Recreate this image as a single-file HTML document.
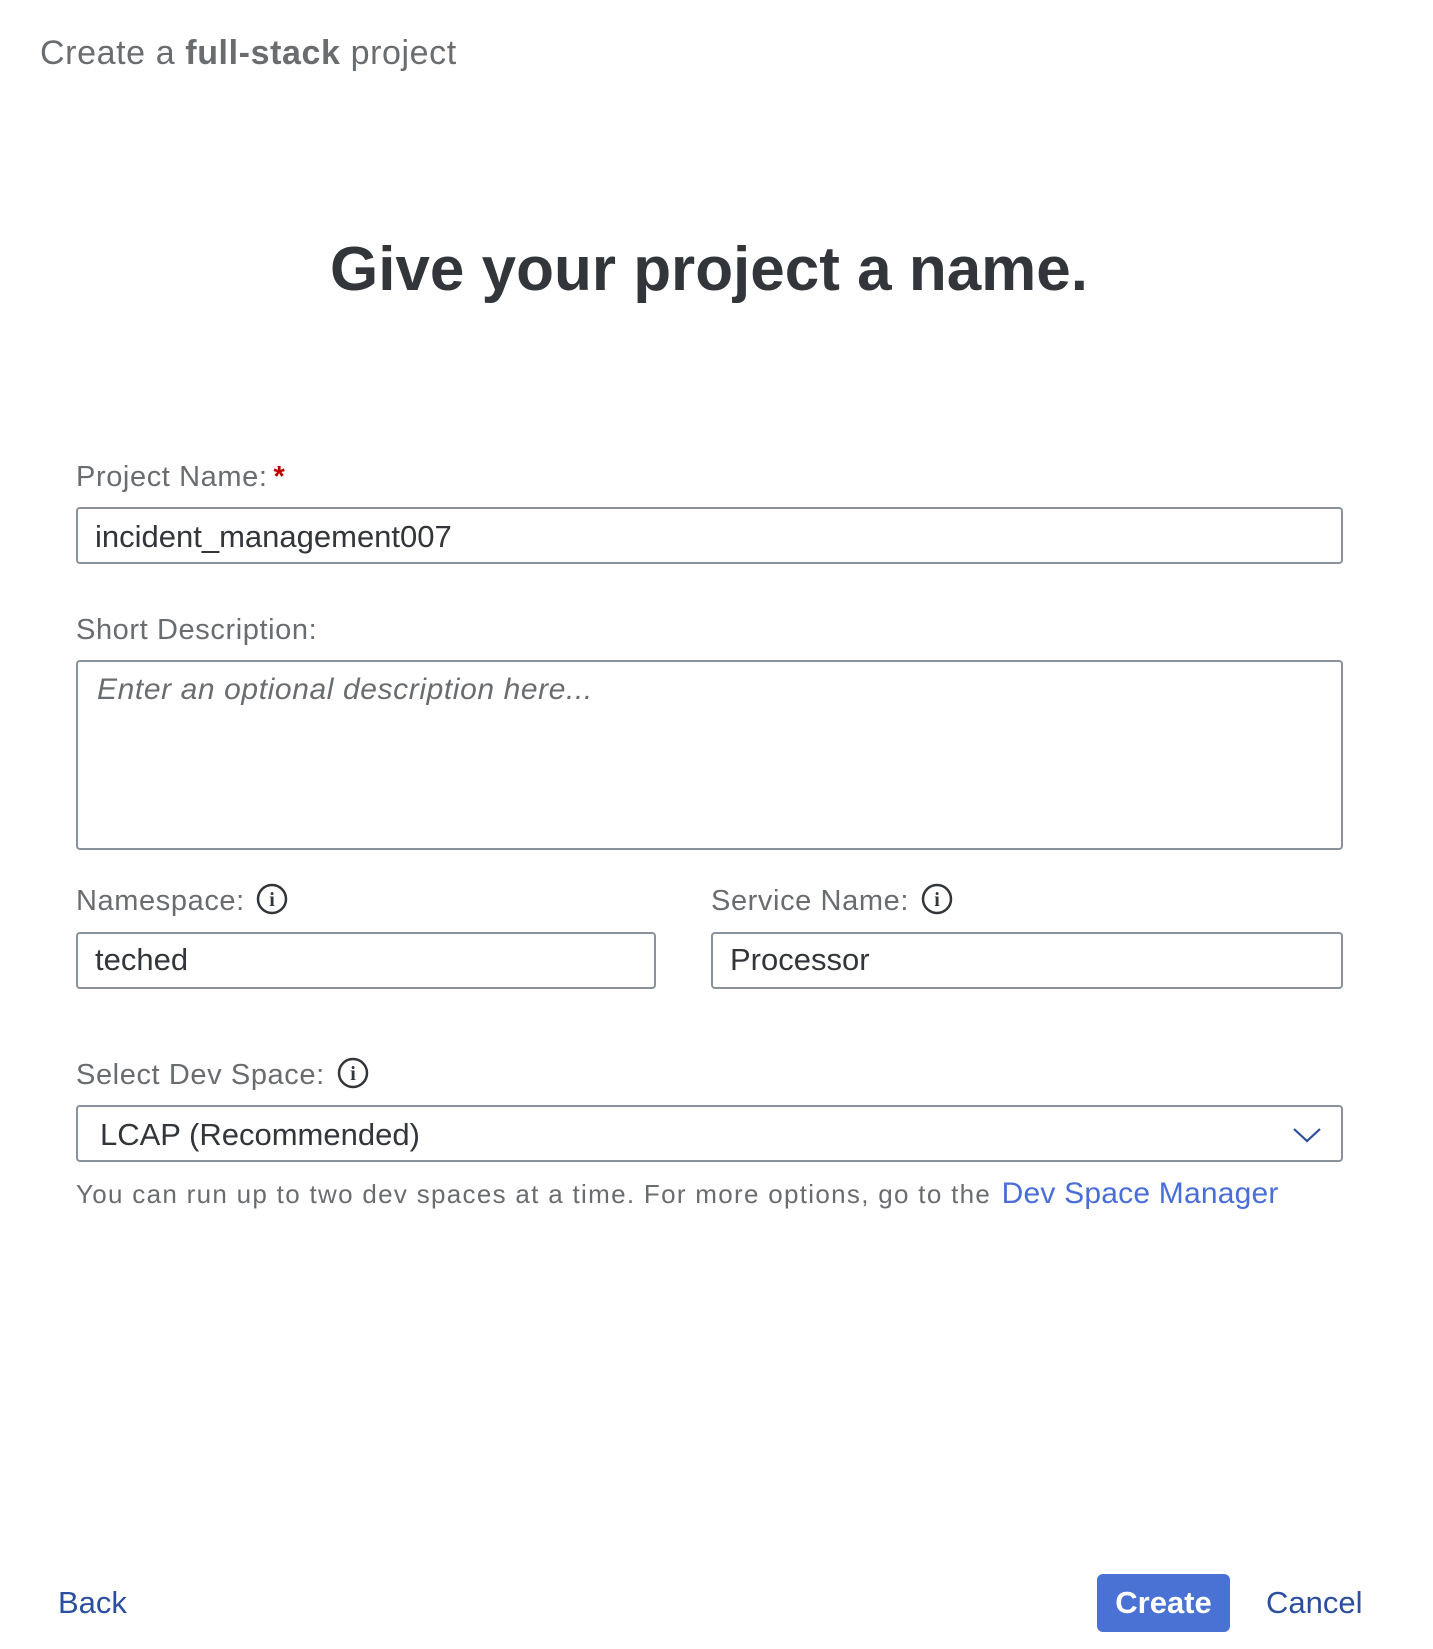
<!DOCTYPE html>
<html><head><meta charset="utf-8"><style>
html,body{margin:0;padding:0;background:#fff;width:1433px;height:1649px;overflow:hidden;position:relative;font-family:"Liberation Sans",sans-serif}
.t{position:absolute;line-height:1;white-space:nowrap}
.lbl{font-size:29px;color:#6a6d70;letter-spacing:0.6px}
.val{font-size:31px;color:#32363a}
.box{position:absolute;border:2px solid #89919a;border-radius:4px;box-sizing:border-box;background:#fff}
.info{position:absolute}
</style></head><body>
<div class="t" style="left:40px;top:36px;font-size:34px;color:#6a6d70;letter-spacing:0.6px">Create a <b>full-stack</b> project</div>
<div class="t" style="left:0;width:1418px;text-align:center;top:239px;font-size:62px;font-weight:bold;color:#32363a">Give your project a name.</div>

<div class="t lbl" style="left:76px;top:463px">Project Name:<span style="color:#bb0000;font-weight:bold;margin-left:6px">*</span></div>
<div class="box" style="left:76px;top:507px;width:1267px;height:57px"></div>
<div class="t val" style="left:95px;top:521px">incident_management007</div>

<div class="t lbl" style="left:76px;top:616px">Short Description:</div>
<div class="box" style="left:76px;top:660px;width:1267px;height:190px"></div>
<div class="t" style="left:97px;top:675px;font-size:30px;font-style:italic;color:#6a6d70;letter-spacing:0.6px">Enter an optional description here...</div>

<div class="t lbl" style="left:76px;top:887px">Namespace:</div>
<svg class="info" style="left:256px;top:883px" width="32" height="32" viewBox="0 0 32 32"><circle cx="16" cy="16" r="14" fill="none" stroke="#32363a" stroke-width="2.5"/><text x="16" y="23" text-anchor="middle" font-family="Liberation Serif,serif" font-weight="bold" font-size="20" fill="#32363a">i</text></svg>
<div class="box" style="left:76px;top:932px;width:580px;height:57px"></div>
<div class="t val" style="left:95px;top:944px">teched</div>

<div class="t lbl" style="left:711px;top:887px">Service Name:</div>
<svg class="info" style="left:921px;top:883px" width="32" height="32" viewBox="0 0 32 32"><circle cx="16" cy="16" r="14" fill="none" stroke="#32363a" stroke-width="2.5"/><text x="16" y="23" text-anchor="middle" font-family="Liberation Serif,serif" font-weight="bold" font-size="20" fill="#32363a">i</text></svg>
<div class="box" style="left:711px;top:932px;width:632px;height:57px"></div>
<div class="t val" style="left:730px;top:944px">Processor</div>

<div class="t lbl" style="left:76px;top:1061px">Select Dev Space:</div>
<svg class="info" style="left:337px;top:1057px" width="32" height="32" viewBox="0 0 32 32"><circle cx="16" cy="16" r="14" fill="none" stroke="#32363a" stroke-width="2.5"/><text x="16" y="23" text-anchor="middle" font-family="Liberation Serif,serif" font-weight="bold" font-size="20" fill="#32363a">i</text></svg>
<div class="box" style="left:76px;top:1105px;width:1267px;height:57px"></div>
<div class="t val" style="left:100px;top:1119px">LCAP (Recommended)</div>
<svg style="position:absolute;left:1292px;top:1126px" width="30" height="18" viewBox="0 0 30 18"><path d="M2 3 L15 15 L28 3" fill="none" stroke="#2b4e9e" stroke-width="2.2"/></svg>

<div class="t" style="left:76px;top:1179px;font-size:26px;color:#6a6d70;letter-spacing:1.3px">You can run up to two dev spaces at a time. For more options, go to the <span style="font-size:30px;color:#4a6ed8;margin-left:2px;letter-spacing:0.2px">Dev Space Manager</span></div>

<div class="t" style="left:58px;top:1587px;font-size:31px;color:#2b4e9e">Back</div>
<div style="position:absolute;left:1097px;top:1574px;width:133px;height:58px;background:#4a72d4;border-radius:6px"></div>
<div class="t" style="left:1097px;width:133px;text-align:center;top:1587px;font-size:31px;font-weight:bold;color:#fff">Create</div>
<div class="t" style="left:1266px;top:1587px;font-size:31px;color:#2b4e9e">Cancel</div>
</body></html>
